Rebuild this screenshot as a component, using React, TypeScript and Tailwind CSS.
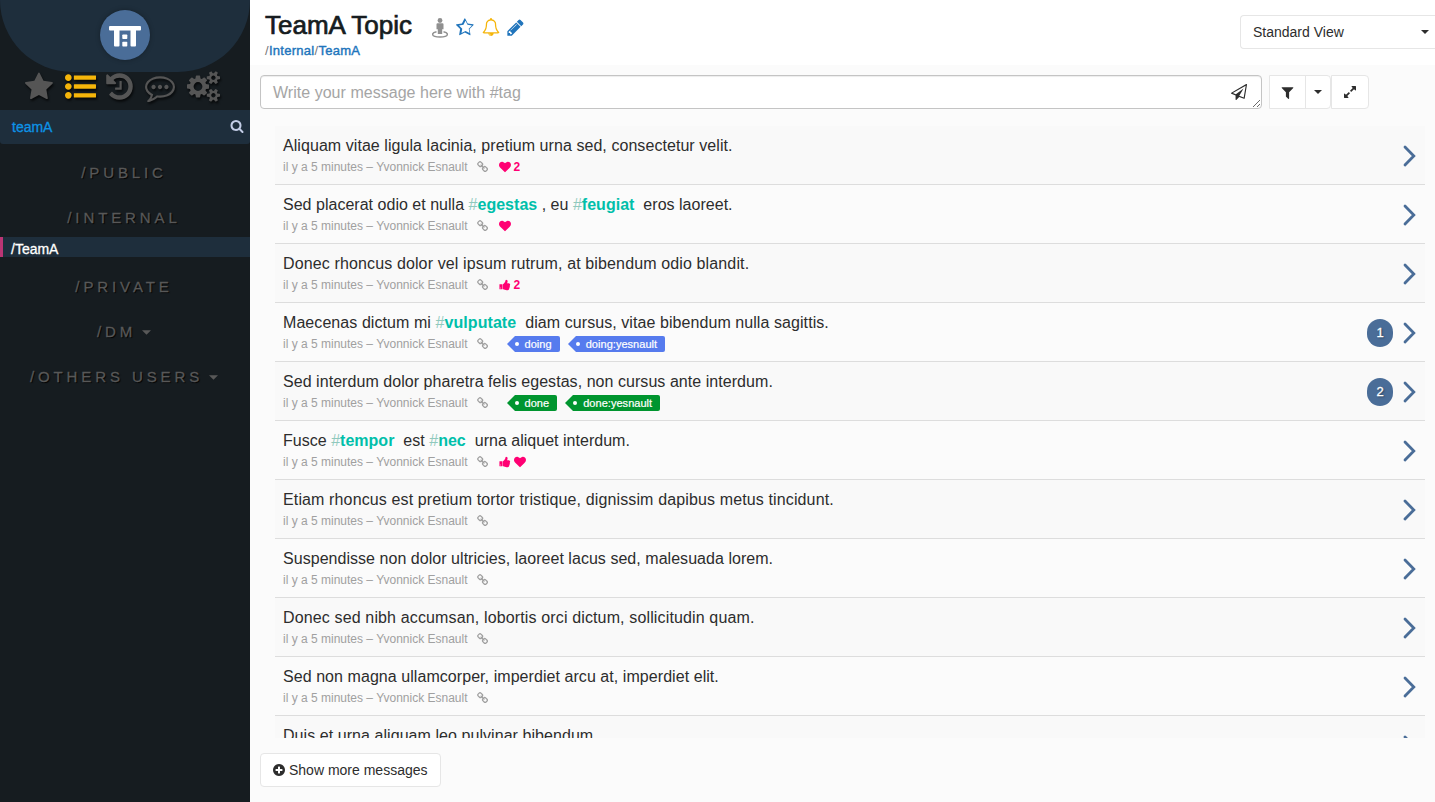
import React from "react";

const PATHS = {
  star: "M1664 647q0 22-26 48l-363 354 86 500q1 7 1 20 0 21-10.5 35.5t-30.5 14.5q-19 0-40-12l-449-236-449 236q-22 12-40 12-21 0-31.5-14.5t-10.5-35.5q0-6 2-20l86-500-364-354q-25-27-25-48 0-37 56-46l502-73 225-455q19-41 49-41t49 41l225 455 502 73q56 9 56 46z",
  starO: "M1201 1004l306-297-422-62-189-382-189 382-422 62 306 297-73 421 378-199 377 199zm463-357q0 22-26 48l-363 354 86 500q1 7 1 20 0 50-41 50-19 0-40-12l-449-236-449 236q-22 12-40 12-21 0-31.5-14.5t-10.5-35.5q0-6 2-20l86-500-364-354q-25-27-25-48 0-37 56-46l502-73 225-455q19-41 49-41t49 41l225 455 502 73q56 9 56 46z",
  list: "M384 1408q0 80-56 136t-136 56-136-56-56-136 56-136 136-56 136 56 56 136zm0-512q0 80-56 136t-136 56-136-56-56-136 56-136 136-56 136 56 56 136zm1408 416v192q0 13-9.5 22.5t-22.5 9.5h-1216q-13 0-22.5-9.5t-9.5-22.5v-192q0-13 9.5-22.5t22.5-9.5h1216q13 0 22.5 9.5t9.5 22.5zm-1408-928q0 80-56 136t-136 56-136-56-56-136 56-136 136-56 136 56 56 136zm1408 416v192q0 13-9.5 22.5t-22.5 9.5h-1216q-13 0-22.5-9.5t-9.5-22.5v-192q0-13 9.5-22.5t22.5-9.5h1216q13 0 22.5 9.5t9.5 22.5zm0-512v192q0 13-9.5 22.5t-22.5 9.5h-1216q-13 0-22.5-9.5t-9.5-22.5v-192q0-13 9.5-22.5t22.5-9.5h1216q13 0 22.5 9.5t9.5 22.5z",
  history: "M1664 896q0 156-61 298t-164 245-245 164-298 61q-172 0-327-72.5t-264-204.5q-7-10-6.5-22.5t8.5-20.5l137-138q10-9 25-9 16 2 23 12 73 95 179 147t225 52q104 0 198.5-40.5t163.5-109.5 109.5-163.5 40.5-198.5-40.5-198.5-109.5-163.5-163.5-109.5-198.5-40.5q-98 0-188 35.5t-160 101.5l137 138q31 30 14 69-17 40-59 40h-448q-26 0-45-19t-19-45v-448q0-42 40-59 39-17 69 14l130 129q107-101 244.5-156.5t284.5-55.5q156 0 298 61t245 164 164 245 61 298zm-640-288v448q0 14-9 23t-23 9h-320q-14 0-23-9t-9-23v-64q0-14 9-23t23-9h224v-352q0-14 9-23t23-9h64q14 0 23 9t9 23z",
  comment: "M640 896q0 53-37.5 90.5t-90.5 37.5-90.5-37.5-37.5-90.5 37.5-90.5 90.5-37.5 90.5 37.5 37.5 90.5zm384 0q0 53-37.5 90.5t-90.5 37.5-90.5-37.5-37.5-90.5 37.5-90.5 90.5-37.5 90.5 37.5 37.5 90.5zm384 0q0 53-37.5 90.5t-90.5 37.5-90.5-37.5-37.5-90.5 37.5-90.5 90.5-37.5 90.5 37.5 37.5 90.5zm-512-512q-204 0-381.5 69.5t-282 187.5-104.5 255q0 112 71.5 213.5t201.5 175.5l87 50-27 96q-24 91-70 172 152-63 275-171l43-38 57 6q69 8 130 8 204 0 381.5-69.5t282-187.5 104.5-255-104.5-255-282-187.5-381.5-69.5zm896 512q0 174-120 321.5t-326 233-450 85.5q-70 0-145-8-198 175-460 242-49 14-114 22h-5q-15 0-27-10.5t-16-27.5v-1q-3-4-.5-12t2-10 4.5-9.5l6-9 7-8.5 8-9q7-8 31-34.5t34.5-38 31-39.5 32.5-51 27-59 26-76q-157-89-247.5-220t-90.5-281q0-174 120-321.5t326-233 450-85.5 450 85.5 326 233 120 321.5z",
  cogs: "M896 896q0-106-75-181t-181-75-181 75-75 181 75 181 181 75 181-75 75-181zm768 512q0-52-38-90t-90-38-90 38-38 90q0 53 37.5 90.5t90.5 37.5 90.5-37.5 37.5-90.5zm0-1024q0-52-38-90t-90-38-90 38-38 90q0 53 37.5 90.5t90.5 37.5 90.5-37.5 37.5-90.5zm-384 421v185q0 10-7 19.5t-16 10.5l-155 24q-11 35-32 76 34 48 90 115 7 11 7 20 0 12-7 19-23 30-82.5 89.5t-78.5 59.5q-11 0-21-7l-115-90q-37 19-77 31-11 108-23 155-7 24-30 24h-186q-11 0-20-7.5t-10-17.5l-23-153q-34-10-75-31l-118 89q-7 7-20 7-11 0-21-8-144-133-144-160 0-9 7-19 10-14 41-53t47-61q-23-44-35-82l-152-24q-10-1-17-9.5t-7-19.5v-185q0-10 7-19.5t16-10.5l155-24q11-35 32-76-34-48-90-115-7-11-7-20 0-12 7-20 22-30 82-89t79-59q11 0 21 7l115 90q34-18 77-32 11-108 23-154 7-24 30-24h186q11 0 20 7.5t10 17.5l23 153q34 10 75 31l118-89q8-7 20-7 11 0 21 8 144 133 144 160 0 8-7 19-12 16-42 54t-45 60q23 48 34 82l152 23q10 2 17 10.5t7 19.5zm640 533v140q0 16-149 31-12 27-30 52 51 113 51 138 0 4-4 7-122 71-124 71-8 0-46-47t-52-68q-20 2-30 2t-30-2q-14 21-52 68t-46 47q-2 0-124-71-4-3-4-7 0-25 51-138-18-25-30-52-149-15-149-31v-140q0-16 149-31 13-29 30-52-51-113-51-138 0-4 4-7 4-2 35-20t59-34 30-16q8 0 46 46.5t52 67.5q20-2 30-2t30 2q51-71 92-112l6-2q4 0 124 70 4 3 4 7 0 25-51 138 17 23 30 52 149 15 149 31zm0-1024v140q0 16-149 31-12 27-30 52 51 113 51 138 0 4-4 7-122 71-124 71-8 0-46-47t-52-68q-20 2-30 2t-30-2q-14 21-52 68t-46 47q-2 0-124-71-4-3-4-7 0-25 51-138-18-25-30-52-149-15-149-31v-140q0-16 149-31 13-29 30-52-51-113-51-138 0-4 4-7 4-2 35-20t59-34 30-16q8 0 46 46.5t52 67.5q20-2 30-2t30 2q51-71 92-112l6-2q4 0 124 70 4 3 4 7 0 25-51 138 17 23 30 52 149 15 149 31z",
  search: "M1216 832q0-185-131.5-316.5t-316.5-131.5-316.5 131.5-131.5 316.5 131.5 316.5 316.5 131.5 316.5-131.5 131.5-316.5zm512 832q0 52-38 90t-90 38q-54 0-90-38l-343-342q-179 124-399 124-143 0-273.5-55.5t-225-150-150-225-55.5-273.5 55.5-273.5 150-225 225-150 273.5-55.5 273.5 55.5 225 150 150 225 55.5 273.5q0 220-124 399l343 343q37 37 37 90z",
  bell: "M912 1696q0-16-16-16-59 0-101.5-42.5t-42.5-101.5q0-16-16-16t-16 16q0 73 51.5 124.5t124.5 51.5q16 0 16-16zm-666-288h1300q-266-300-266-832 0-51-24-105t-69-103-121.5-80.5-169.5-31.5-169.5 31.5-121.5 80.5-69 103-24 105q0 532-266 832zm1482 0q0 52-38 90t-90 38h-448q0 106-75 181t-181 75-181-75-75-181h-448q-52 0-90-38t-38-90q50-42 91-88t85-119.5 74.5-158.5 50-206 19.5-260q0-152 117-282.5t307-158.5q-8-19-8-39 0-40 28-68t68-28 68 28 28 68q0 20-8 39 190 28 307 158.5t117 282.5q0 139 19.5 260t50 206 74.5 158.5 85 119.5 91 88z",
  pencil: "M491 1536l91-91-235-235-91 91v107h128v128h107zm523-928q0-22-22-22-10 0-17 7l-542 542q-7 7-7 17 0 22 22 22 10 0 17-7l542-542q7-7 7-17zm-54-192l416 416-832 832h-416v-416zm683 96q0 53-37 90l-166 166-416-416 166-165q36-38 90-38 53 0 91 38l235 234q37 39 37 91z",
  plane: "M1764 11q33 24 27 64l-256 1536q-5 29-32 45-14 8-31 8-11 0-24-5l-527-215-298 327q-18 21-47 21-14 0-23-4-19-7-30-23.5t-11-36.5v-452l-472-193q-37-14-40-55-3-39 32-59l1664-960q35-21 68 2zm-342 1499l221-1323-1434 827 336 137 863-639-478 797z",
  filter: "M1595 295q17 41-14 70l-493 493v742q0 42-39 59-13 5-25 5-27 0-45-19l-256-256q-19-19-19-45v-486l-493-493q-31-29-14-70 17-39 59-39h1280q42 0 59 39z",
  expand: "M883 1056q0 13-10 23l-332 332 144 144q19 19 19 45t-19 45-45 19h-448q-26 0-45-19t-19-45v-448q0-26 19-45t45-19 45 19l144 144 332-332q10-10 23-10t23 10l114 114q10 10 10 23zm781-864v448q0 26-19 45t-45 19-45-19l-144-144-332 332q-10 10-23 10t-23-10l-114-114q-10-10-10-23t10-23l332-332-144-144q-19-19-19-45t19-45 45-19h448q26 0 45 19t19 45z",
  heart: "M896 1664q-26 0-44-18l-624-602q-10-8-27.5-26t-55.5-65.5-68-97.5-53.5-121-23.5-138q0-220 127-344t351-124q62 0 126.5 21.5t120 58 95.5 68.5 76 68q36-36 76-68t95.5-68.5 120-58 126.5-21.5q224 0 351 124t127 344q0 221-229 450l-623 600q-18 18-44 18z",
  thumb: "M320 1344q0-26-19-45t-45-19q-27 0-45.5 19t-18.5 45q0 27 18.5 45.5t45.5 18.5q26 0 45-18.5t19-45.5zm160-512v640q0 26-19 45t-45 19h-288q-26 0-45-19t-19-45v-640q0-26 19-45t45-19h288q26 0 45 19t19 45zm1184 0q0 86-55 149 15 44 15 76 3 76-43 137 17 56 0 117-15 57-54 94 9 112-49 181-64 76-197 78h-129q-66 0-144-15.5t-121.5-29-120.5-39.5q-123-43-158-44-26-1-45-19.5t-19-44.5v-641q0-25 18-43.5t43-20.5q24-2 76-59t101-121q68-87 101-120 18-18 31-48t17.5-48.5 13.5-60.5q7-39 12.5-61t19.5-52 34-50q19-19 45-19 46 0 82.5 10.5t60 26 40 40.5 24 45 12 50 5 45 .5 39q0 38-9.5 76t-19 60-27.5 56q-3 6-10 18t-11 22-8 24h277q78 0 135 57t57 135z",
  link: "M1456 1216q0-40-28-68l-208-208q-28-28-68-28-42 0-72 32 3 3 19 18.5t21.5 21.5 15 19 13 25.5 3.5 27.5q0 40-28 68t-68 28q-15 0-27.5-3.5t-25.5-13-19-15-21.5-21.5-18.5-19q-33 31-33 73 0 40 28 68l206 207q27 27 68 27 40 0 68-26l147-146q28-28 28-67zm-703-705q0-40-28-68l-206-207q-28-28-68-28-39 0-68 27l-147 146q-28 28-28 67 0 40 28 68l208 208q27 27 68 27 42 0 72-31-3-3-19-18.5t-21.5-21.5-15-19-13-25.5-3.5-27.5q0-40 28-68t68-28q15 0 27.5 3.5t25.5 13 19 15 21.5 21.5 18.5 19q33-31 33-73zm895 705q0 120-85 203l-147 146q-83 83-203 83-121 0-204-85l-206-207q-83-83-83-203 0-123 88-209l-88-88q-86 88-208 88-120 0-204-84l-208-208q-84-84-84-204t85-203l147-146q83-83 203-83 121 0 204 85l206 207q83 83 83 203 0 123-88 209l88 88q86-88 208-88 120 0 204 84l208 208q84 84 84 204z",
  plus: "M1344 960v-128q0-26-19-45t-45-19h-256v-256q0-26-19-45t-45-19h-128q-26 0-45 19t-19 45v256h-256q-26 0-45 19t-19 45v128q0 26 19 45t45 19h256v256q0 26 19 45t45 19h128q26 0 45-19t19-45v-256h256q26 0 45-19t19-45zm320-64q0 209-103 385.5t-279.5 279.5-385.5 103-385.5-103-279.5-279.5-103-385.5 103-385.5 279.5-279.5 385.5-103 385.5 103 279.5 279.5 103 385.5z",
};

function Icon({ name, className, box = "0 0 1792 1792" }: { name: keyof typeof PATHS; className: string; box?: string }) {
  return (
    <svg viewBox={box} fill="currentColor" className={`shrink-0 ${className}`}>
      <path d={PATHS[name]} />
    </svg>
  );
}

function Caret({ className }: { className: string }) {
  return (
    <svg viewBox="0 0 8 4" fill="currentColor" className={`shrink-0 ${className}`}>
      <path d="M0 0h8l-4 4z" />
    </svg>
  );
}

type Row = {
  text: string;
  tracking: string;
  marks?: ("heart" | "thumb")[];
  count?: number;
  labels?: string[];
  color?: "blue" | "green";
  replies?: number;
};

const rows: Row[] = [
  { text: "Aliquam vitae ligula lacinia, pretium urna sed, consectetur velit.", tracking: "tracking-[0.06px]", marks: ["heart"], count: 2 },
  { text: "Sed placerat odio et nulla #egestas , eu #feugiat  eros laoreet.", tracking: "tracking-[0.02px]", marks: ["heart"] },
  { text: "Donec rhoncus dolor vel ipsum rutrum, at bibendum odio blandit.", tracking: "tracking-[0.13px]", marks: ["thumb"], count: 2 },
  { text: "Maecenas dictum mi #vulputate  diam cursus, vitae bibendum nulla sagittis.", tracking: "tracking-[0.07px]", labels: ["doing", "doing:yesnault"], color: "blue", replies: 1 },
  { text: "Sed interdum dolor pharetra felis egestas, non cursus ante interdum.", tracking: "tracking-[0.05px]", labels: ["done", "done:yesnault"], color: "green", replies: 2 },
  { text: "Fusce #tempor  est #nec  urna aliquet interdum.", tracking: "tracking-[0.02px]", marks: ["thumb", "heart"] },
  { text: "Etiam rhoncus est pretium tortor tristique, dignissim dapibus metus tincidunt.", tracking: "tracking-[0.13px]" },
  { text: "Suspendisse non dolor ultricies, laoreet lacus sed, malesuada lorem.", tracking: "tracking-[0.04px]" },
  { text: "Donec sed nibh accumsan, lobortis orci dictum, sollicitudin quam.", tracking: "tracking-[0.14px]" },
  { text: "Sed non magna ullamcorper, imperdiet arcu at, imperdiet elit.", tracking: "tracking-[0.06px]" },
  { text: "Duis et urna aliquam leo pulvinar bibendum.", tracking: "tracking-[0.06px]" },
];

function Body({ text }: { text: string }) {
  return (
    <>
      {text.split(/(#\w+)/).map((part, i) =>
        part.startsWith("#") ? (
          <span key={i} className="text-[#00bfaa]">
            <span className="text-[#8fc9bd]">#</span>
            <b>{part.slice(1)}</b>
          </span>
        ) : (
          <span key={i}>{part}</span>
        )
      )}
    </>
  );
}

function Label({ text, color }: { text: string; color?: "blue" | "green" }) {
  const fill = color === "green" ? "bg-[#00952f]" : "bg-[#567bee]";
  const tone = color === "green" ? "text-[#00952f]" : "text-[#567bee]";
  return (
    <span className="mr-2 flex h-4 items-center">
      <svg viewBox="0 0 8 16" className={`h-4 w-2 ${tone}`} fill="currentColor">
        <path d="M8 0v16L0 8z" />
      </svg>
      <span className={`flex h-4 items-center rounded-r-[2px] pr-2 text-[11px] tracking-[0.04px] text-white [-webkit-text-stroke:0.2px_#fff] ${fill}`}>
        <i className="mr-1.5 size-1 rounded-full bg-white" />
        {text}
      </span>
    </span>
  );
}

function MessageRow({ row }: { row: Row }) {
  return (
    <div className="flex h-[59px] shrink-0 items-center border-b border-[#dddddd] pl-2 pr-2 odd:bg-[#f9f9f9]">
      <div className="flex grow flex-col pt-0.5">
        <div className={`h-5 whitespace-pre text-base leading-5 text-[#2d2d2d] ${row.tracking}`}>
          <Body text={row.text} />
        </div>
        <div className="mt-px flex h-5 items-center text-xs leading-5 text-[#a0a0a0]">
          <span className="whitespace-pre">il y a 5 minutes – Yvonnick Esnault</span>
          <Icon name="link" className="ml-[9px] mr-2.5 size-3" />
          {row.marks && (
            <span className="flex items-center gap-[3px] text-[#ff0073]">
              {row.marks.map((m) => (
                <Icon key={m} name={m} className="size-3" />
              ))}
              {row.count && <b>{row.count}</b>}
            </span>
          )}
          {row.labels && (
            <span className="ml-2 flex">
              {row.labels.map((l) => (
                <Label key={l} text={l} color={row.color} />
              ))}
            </span>
          )}
        </div>
      </div>
      {row.replies && (
        <span className="mr-2.5 mt-0.5 flex h-7 w-[26px] items-center justify-center rounded-full bg-[#4a6d98] text-[13px] text-white [-webkit-text-stroke:0.3px_#fff] [text-shadow:1px_1px_2px_rgba(0,0,0,.5)]">
          {row.replies}
        </span>
      )}
      <svg viewBox="0 0 14 22" className="mt-0.5 h-[22px] w-3.5 text-[#4a6d98]" fill="none" stroke="currentColor" strokeWidth="2.8" strokeLinecap="round">
        <path d="M2 2l8.800 9L2 20" />
      </svg>
    </div>
  );
}

function Section({ title, caret }: { title: string; caret?: boolean }) {
  return (
    <div className="flex h-[45px] items-center justify-center pr-0.5 pt-3 text-[15px] tracking-[3.9px] text-[#585858] [-webkit-text-stroke:0.3px_#585858] [text-shadow:1px_1px_1px_#000]">
      <span>{title}</span>
      {caret && <Caret className="ml-1.5 h-[5px] w-[9px]" />}
    </div>
  );
}

export default function App() {
  const nav = "drop-shadow-[1px_2px_1px_rgba(0,0,0,0.7)]";
  return (
    <div className="flex h-[802px] w-[1435px] overflow-hidden bg-[#fbfbfb] font-['Liberation_Sans',Arial,sans-serif]">
      <aside className="flex w-[250px] shrink-0 flex-col bg-[#161c20]">
        <div className="flex h-[72px] justify-center rounded-b-[72px] bg-[#1e2e3c] pt-2.5">
          <svg viewBox="0 0 50 50" className="size-[50px] rounded-full bg-[#4a6d98] shadow-[0_0_5px_rgba(0,0,0,0.3)]" fill="#fff">
            <rect x="9" y="16" width="32" height="4.5" rx="1" />
            <rect x="14" y="16" width="5.5" height="20.5" rx="1" />
            <rect x="30.5" y="16" width="5.5" height="20.5" rx="1" />
            <rect x="22.3" y="24.5" width="5" height="4.5" rx=".7" />
            <rect x="22.3" y="31.8" width="5" height="4.7" rx=".7" />
          </svg>
        </div>
        <nav className="flex h-[38px] items-start pl-[25px] text-[#555555]">
          <Icon name="star" className={`size-[30px] ${nav}`} />
          <Icon name="list" className={`ml-2.5 mt-[-1px] size-[31px] text-[#f5b50a] ${nav}`} />
          <Icon name="history" className={`ml-2 mt-[-1px] size-[31px] ${nav}`} />
          <Icon name="comment" className={`ml-2.5 size-[30px] ${nav}`} />
          <Icon name="cogs" box="0 0 1920 1792" className={`ml-3 mt-[-1px] h-[31px] w-[33px] ${nav}`} />
        </nav>
        <div className="flex h-[34px] items-center justify-between rounded-b-[3px] bg-[#1e2e3c] pl-3 pr-1.5 text-[#c3cde6]">
          <span className="text-[14px] text-[#0d93e6] [-webkit-text-stroke:0.3px_#0d93e6]">teamA</span>
          <Icon name="search" className="mb-0.5 size-3.5" />
        </div>
        <div className="mt-px">
          <Section title="/PUBLIC" />
          <Section title="/INTERNAL" />
          <div className="mb-0.5 mt-0.5 flex h-5 items-center border-l-[3px] border-[#bb3574] bg-[#1e2e3c] pl-2 pt-1 text-[14px] text-white [-webkit-text-stroke:0.3px_#fff]">/TeamA</div>
          <Section title="/PRIVATE" />
          <Section title="/DM" caret />
          <Section title="/OTHERS USERS" caret />
        </div>
      </aside>
      <main className="flex grow flex-col">
        <header className="flex h-[65px] items-start justify-between bg-white">
          <div className="pl-[15px] pt-2.5">
            <div className="flex h-[31px] items-center">
              <h1 className="text-[26px] leading-[31px] text-[#161c20] [-webkit-text-stroke:0.7px_#161c20]">TeamA Topic</h1>
              <svg viewBox="0 0 16 20" className="ml-5 mt-1 h-5 w-4 text-[#909090]" fill="currentColor">
                <circle cx="8" cy="2.5" r="2.4" />
                <path d="M5.500 5.200h5q1 0 1 1v5h-1.300V16H5.800v-4.800H4.500v-5q0-1 1-1z" />
                <path d="M4.500 13.800C2 14.300.6 15.200.6 16.200c0 1.700 3.300 2.800 7.400 2.800s7.400-1.100 7.400-2.800c0-1-1.400-1.900-3.900-2.400" fill="none" stroke="currentColor" strokeWidth="1.5" />
              </svg>
              <Icon name="starO" className="ml-2 mt-1 size-[19px] text-[#2175bc]" />
              <Icon name="bell" className="ml-[7px] mt-[3px] size-[18px] text-[#f5b50a]" />
              <Icon name="pencil" className="ml-1.5 mt-1 size-[19px] text-[#2175bc]" />
            </div>
            <div className="pt-px text-[13px] leading-[18px] tracking-[0.28px] text-[#777777]">
              /<span className="text-[#2175bc] [-webkit-text-stroke:0.4px_#2175bc]">Internal</span>/<span className="text-[#2175bc] [-webkit-text-stroke:0.4px_#2175bc]">TeamA</span>
            </div>
          </div>
          <div className="mt-[15px] flex h-[34px] w-[195px] items-center justify-between rounded-l border border-r-0 border-[#e6e6e6] pl-3 pr-1.5 text-[#2d2d2d]">
            <span className="text-[14px]">Standard View</span>
            <Caret className="h-1 w-2" />
          </div>
        </header>
        <div className="flex pl-2.5 pt-2.5 text-[#2d2d2d]">
          <div className="relative flex h-[34px] w-[1002px] items-center justify-between rounded border border-[#c4c4c4] bg-white pl-3 pr-3.5 shadow-[inset_0_1px_1px_rgba(0,0,0,0.075)]">
            <span className="pt-0.5 text-base tracking-[0.03px] text-[#a5a5a5]">Write your message here with #tag</span>
            <Icon name="plane" className="size-4" />
            <svg viewBox="0 0 8 8" className="absolute bottom-0 right-0 size-2" stroke="#444" strokeWidth=".8">
              <path d="M0 7L7 0M4 7l3-3" />
            </svg>
          </div>
          <div className="ml-[7px] flex h-[34px] w-[62px] rounded-r border border-[#e6e6e6] bg-white">
            <div className="flex w-[35px] items-center justify-center"><Icon name="filter" className="size-[15px]" /></div>
            <div className="flex w-[25px] items-center justify-center border-l border-[#e6e6e6]"><Caret className="h-1 w-2" /></div>
          </div>
          <div className="flex h-[34px] w-[38px] items-center justify-center rounded-r border border-[#e6e6e6] bg-white"><Icon name="expand" className="size-3.5" /></div>
        </div>
        <div className="ml-[25px] mt-[17px] flex h-[612px] w-[1150px] flex-col overflow-hidden">
          {rows.map((row) => (
            <MessageRow key={row.text} row={row} />
          ))}
        </div>
        <button className="ml-2.5 mt-[15px] flex h-[34px] w-[181px] items-center rounded border border-[#e6e6e6] bg-white pl-3 text-[14px] text-[#2d2d2d]">
          <Icon name="plus" box="128 128 1536 1536" className="mr-1 size-3" />
          Show more messages
        </button>
      </main>
    </div>
  );
}
